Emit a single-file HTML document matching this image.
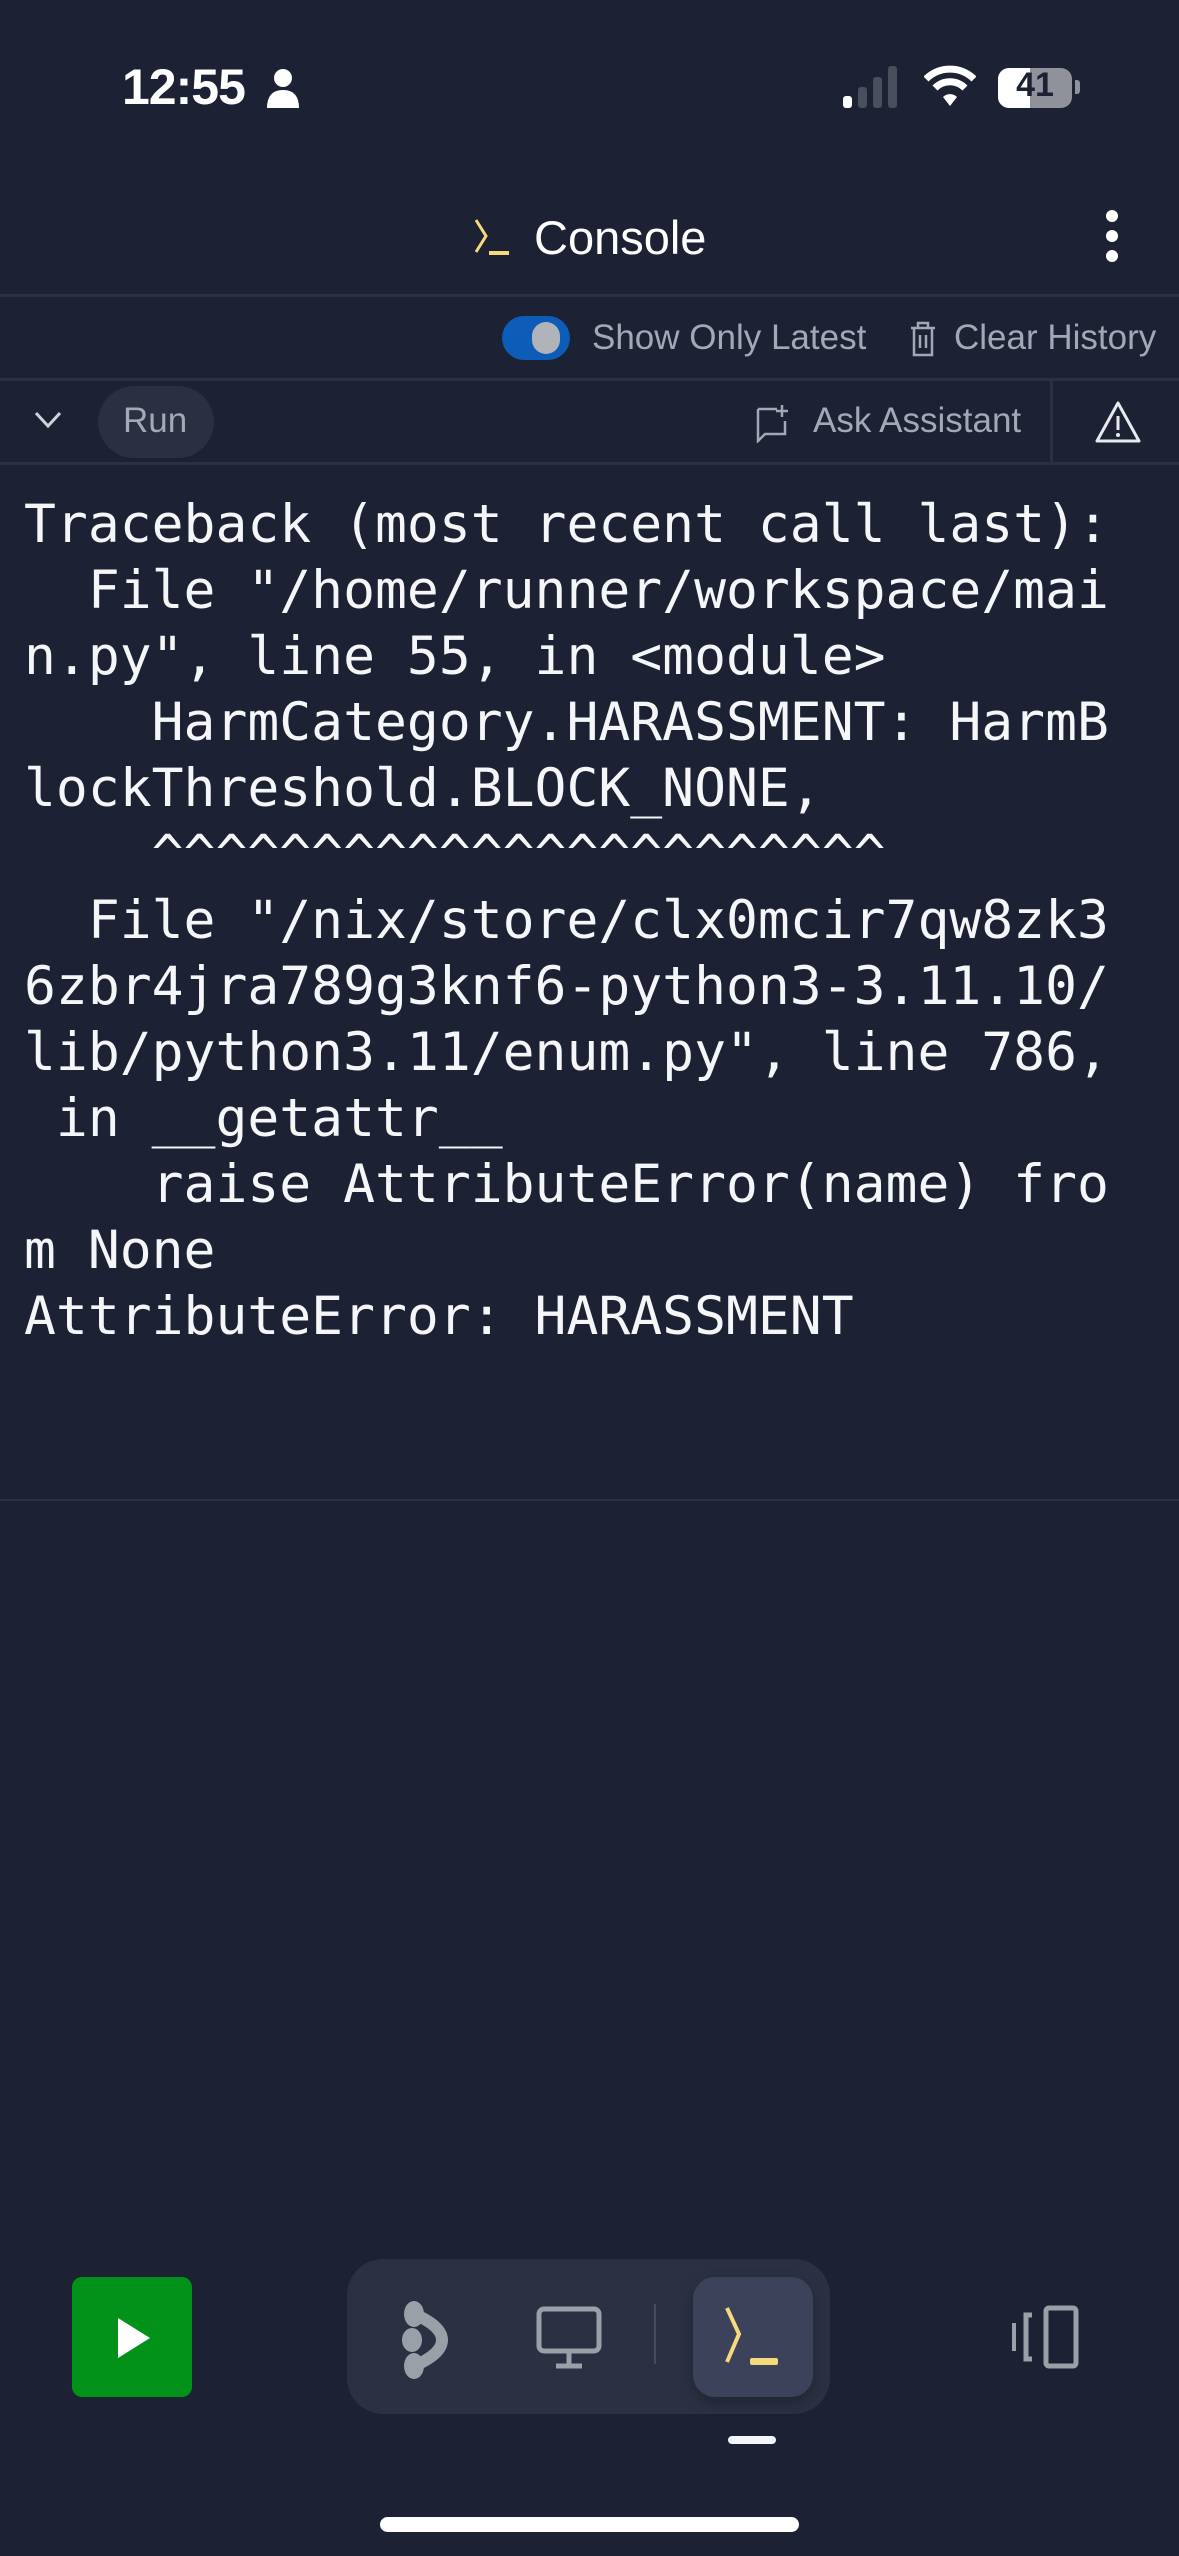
<!DOCTYPE html>
<html><head><meta charset="utf-8"><style>
*{margin:0;padding:0;box-sizing:border-box}
body{width:1179px;height:2556px;background:#1c2133;position:relative;overflow:hidden;font-family:"Liberation Sans",sans-serif;color:#fff}
.a{position:absolute}
.hr{position:absolute;left:0;width:1179px;height:3px;background:#2b3044}
.con{position:absolute;left:24px;top:492px;font-family:"DejaVu Sans Mono","Liberation Mono",monospace;font-size:53px;line-height:66px;white-space:pre;color:#f5f6f8}
.g{color:#a3a8b4;font-size:35px}
</style></head><body>
<div class="a" style="left:122px;top:58px;font-size:50px;font-weight:bold;letter-spacing:-1px">12:55</div>
<svg class="a" style="left:266px;top:68px" width="34" height="40" viewBox="0 0 34 40"><circle cx="17" cy="10" r="9" fill="#fff"/><path d="M1 40 Q1 22 17 22 Q33 22 33 40Z" fill="#fff"/></svg>
<svg class="a" style="left:843px;top:66px" width="62" height="42"><rect x="0" y="30" width="9" height="12" rx="3" fill="#fff"/><rect x="15" y="21" width="9" height="21" rx="3" fill="#4a4f5e"/><rect x="30" y="11" width="9" height="31" rx="3" fill="#4a4f5e"/><rect x="45" y="0" width="9" height="42" rx="3" fill="#4a4f5e"/></svg>
<svg class="a" style="left:924px;top:64px" width="52" height="44" viewBox="0 0 52 44"><path d="M2 15 A34 34 0 0 1 50 15" stroke="#fff" stroke-width="7" fill="none"/><path d="M11 24 A21 21 0 0 1 41 24" stroke="#fff" stroke-width="7" fill="none"/><path d="M19 33 L26 42 L33 33 A10 10 0 0 0 19 33Z" fill="#fff"/></svg>
<div class="a" style="left:998px;top:68px;width:74px;height:40px;border-radius:11px;background:#8f929a;overflow:hidden"><div style="width:32px;height:40px;background:#fff"></div></div>
<div class="a" style="left:998px;top:66px;width:74px;text-align:center;font-size:34px;font-weight:bold;color:#1c2133">41</div>
<div class="a" style="left:1075px;top:80px;width:5px;height:14px;border-radius:0 3px 3px 0;background:#8f929a"></div>
<svg class="a" style="left:472px;top:218px" width="40" height="40"><path d="M4 2 L14 18 L4 34" stroke="#f5d97a" stroke-width="3" fill="none"/><rect x="17" y="33" width="20" height="4" fill="#f5d97a"/></svg>
<div class="a" style="left:534px;top:210px;font-size:47px;font-weight:500">Console</div>
<div class="a" style="left:1106px;top:210px;width:12px;height:12px;border-radius:6px;background:#fff"></div>
<div class="a" style="left:1106px;top:230px;width:12px;height:12px;border-radius:6px;background:#fff"></div>
<div class="a" style="left:1106px;top:250px;width:12px;height:12px;border-radius:6px;background:#fff"></div>
<div class="hr" style="top:294px"></div>
<div class="a" style="left:502px;top:316px;width:68px;height:44px;border-radius:22px;background:#0c5cb8"></div>
<div class="a" style="left:532px;top:322px;width:28px;height:32px;border-radius:14px;background:#b0b3ba"></div>
<div class="a g" style="left:592px;top:318px">Show Only Latest</div>
<svg class="a" style="left:908px;top:320px" width="30" height="38"><path d="M3 8 H27 M10 8 V3 H20 V8 M6 8 V35 H24 V8 M12 15 V28 M18 15 V28" stroke="#a3a8b4" stroke-width="2.5" fill="none"/></svg>
<div class="a g" style="left:954px;top:318px">Clear History</div>
<div class="hr" style="top:378px"></div>
<svg class="a" style="left:34px;top:410px" width="28" height="20"><path d="M2 3 L14 16 L26 3" stroke="#d0d3da" stroke-width="3" fill="none"/></svg>
<div class="a" style="left:98px;top:386px;width:116px;height:72px;border-radius:36px;background:#2a2f42"></div>
<div class="a g" style="left:123px;top:401px">Run</div>
<svg class="a" style="left:755px;top:403px" width="36" height="40"><path d="M3 6 H22 M3 6 V38 L10 31 H30 V18" stroke="#a3a8b4" stroke-width="2.5" fill="none"/><path d="M27 2 V14 M21 8 H33" stroke="#a3a8b4" stroke-width="2.5"/></svg>
<div class="a g" style="left:813px;top:401px">Ask Assistant</div>
<div class="a" style="left:1050px;top:380px;width:3px;height:84px;background:#2b3044"></div>
<svg class="a" style="left:1094px;top:400px" width="48" height="44"><path d="M24 3 L45 41 H3Z" stroke="#e8eaee" stroke-width="3" fill="none" stroke-linejoin="round"/><path d="M24 16 V30" stroke="#e8eaee" stroke-width="3"/><circle cx="24" cy="35" r="2" fill="#e8eaee"/></svg>
<div class="hr" style="top:462px"></div>
<div class="con">Traceback (most recent call last):
  File "/home/runner/workspace/mai
n.py", line 55, in &lt;module&gt;
    HarmCategory.HARASSMENT: HarmB
lockThreshold.BLOCK_NONE,
    ^^^^^^^^^^^^^^^^^^^^^^^
  File "/nix/store/clx0mcir7qw8zk3
6zbr4jra789g3knf6-python3-3.11.10/
lib/python3.11/enum.py", line 786,
 in __getattr__
    raise AttributeError(name) fro
m None
AttributeError: HARASSMENT</div>
<div class="hr" style="top:1499px;height:2px"></div>
<div class="a" style="left:72px;top:2277px;width:120px;height:120px;border-radius:10px;background:#02921a"></div>
<svg class="a" style="left:114px;top:2316px" width="40" height="44"><path d="M4 2 L36 22 L4 42Z" fill="#fff"/></svg>
<div class="a" style="left:347px;top:2259px;width:483px;height:155px;border-radius:36px;background:#2b3043"></div>
<div class="a" style="left:693px;top:2277px;width:120px;height:120px;border-radius:22px;background:#3c4259;box-shadow:0 6px 14px rgba(0,0,0,.25)"></div>
<svg class="a" style="left:398px;top:2300px" width="52" height="80" viewBox="0 0 52 80"><ellipse cx="16" cy="14" rx="10" ry="13" fill="#9aa0a8"/><ellipse cx="14" cy="40" rx="10" ry="12" fill="#9aa0a8"/><ellipse cx="16" cy="66" rx="10" ry="13" fill="#9aa0a8"/><path d="M16 14 Q44 26 44 40 Q44 54 16 66" stroke="#9aa0a8" stroke-width="12" fill="none"/></svg>
<svg class="a" style="left:536px;top:2306px" width="68" height="64"><rect x="3" y="3" width="60" height="42" rx="5" stroke="#9aa0a8" stroke-width="5" fill="none"/><path d="M33 45 V58 M20 60 H46" stroke="#9aa0a8" stroke-width="5"/></svg>
<div class="a" style="left:654px;top:2304px;width:2px;height:60px;background:#454b60"></div>
<svg class="a" style="left:722px;top:2306px" width="60" height="62"><path d="M5 2 L17 28 L5 56" stroke="#f5d97a" stroke-width="4" fill="none"/><rect x="28" y="52" width="28" height="7" rx="2" fill="#f5d97a"/></svg>
<svg class="a" style="left:1010px;top:2305px" width="72" height="64"><path d="M4 18 V46" stroke="#9aa0a8" stroke-width="4"/><path d="M22 10 H16 V54 H22" stroke="#9aa0a8" stroke-width="5" fill="none"/><rect x="36" y="3" width="30" height="58" rx="3" stroke="#9aa0a8" stroke-width="5" fill="none"/></svg>
<div class="a" style="left:728px;top:2436px;width:48px;height:8px;border-radius:4px;background:#f3f6fb"></div>
<div class="a" style="left:380px;top:2517px;width:419px;height:15px;border-radius:8px;background:#fff"></div>
</body></html>
